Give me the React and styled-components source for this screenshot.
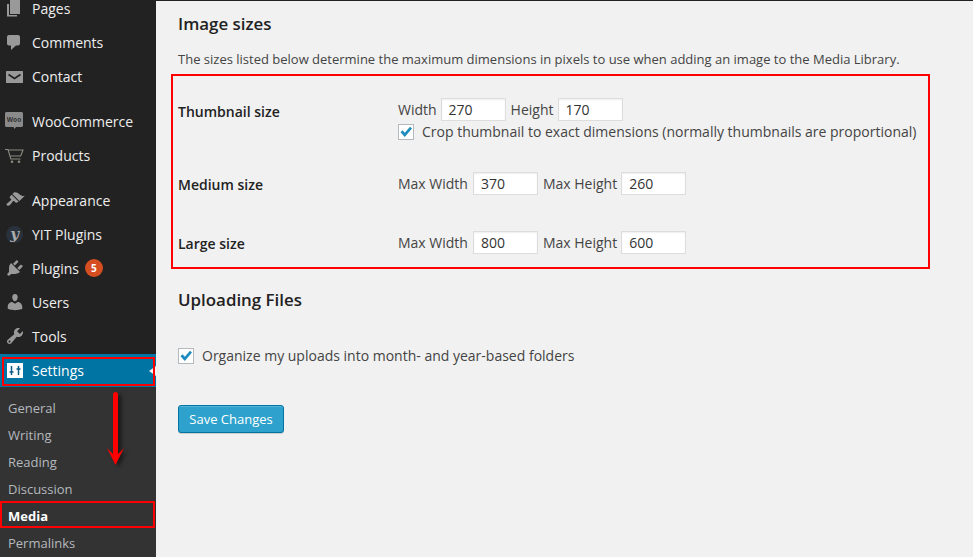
import React from "react";
import styled, { createGlobalStyle } from "styled-components";

const GlobalStyle = createGlobalStyle`
  html, body {
    margin: 0;
    padding: 0;
    height: 557px;
    overflow: hidden;
    background: #f1f1f1;
    font-family: "Open Sans", "Liberation Sans", sans-serif;
  }
`;

const Page = styled.div`
  position: relative;
  display: flex;
  width: 973px;
  height: 557px;
  overflow: hidden;
`;

const Sidebar = styled.nav`
  width: 156px;
  height: 557px;
  flex: none;
  overflow: hidden;
  background: #222;
`;

const MenuList = styled.div`
  display: flex;
  flex-direction: column;
  margin-top: -9px;
`;

const MenuItem = styled.div`
  display: flex;
  align-items: center;
  height: ${p => (p.$current ? "33px" : "34px")};
  padding-left: 5px;
  gap: 7px;
  color: ${p => (p.$current ? "#fff" : "#eee")};
  background: ${p => (p.$current ? "#0074a2" : "transparent")};
  font-size: 14px;
  margin-top: ${p => (p.$spaced ? "11px" : p.$current ? "1px" : "0")};
  position: relative;
`;

const IconBox = styled.svg`
  width: 20px;
  height: 20px;
  flex: none;
  fill: #999;
`;

const YitBadge = styled.span`
  width: 17px;
  height: 17px;
  margin: 0 2px 0 1px;
  flex: none;
  display: flex;
  align-items: center;
  justify-content: center;
  border-radius: 50%;
  background: #29323c;
  color: #aaa;
  font-family: "DejaVu Serif", serif;
  font-style: italic;
  font-weight: bold;
  font-size: 15px;
  line-height: 1;
`;

const CountBadge = styled.span`
  width: 18px;
  height: 18px;
  margin-left: -1px;
  border-radius: 50%;
  background: #d54e21;
  color: #fff;
  font-size: 10px;
  font-weight: 700;
  line-height: 18px;
  text-align: center;
`;

const CurrentArrow = styled.span`
  position: absolute;
  right: 0;
  top: 12px;
  border-style: solid;
  border-color: transparent #f1f1f1 transparent transparent;
  border-width: 5px 7px 5px 0;
`;

const SubMenu = styled.div`
  display: flex;
  flex-direction: column;
  padding-top: 8px;
  background: #333;
  height: 200px;
`;

const SubItem = styled.div`
  height: 27px;
  padding-left: 8px;
  line-height: 27px;
  font-size: 13px;
  color: ${p => (p.$active ? "#fff" : "#b4b9be")};
  font-weight: ${p => (p.$active ? 700 : 400)};
`;

const Main = styled.main`
  flex: 1;
  padding: 11px 0 0 22px;
  border-top: 1px solid #222;
  color: #444;
  box-sizing: border-box;
`;

const SectionTitle = styled.h3`
  margin: ${p => p.$top || 0}px 0 0;
  font-size: 16.9px;
  font-weight: 600;
  line-height: 23px;
  color: #222;
`;

const Description = styled.p`
  margin: 14px 0 0;
  font-size: 13px;
  line-height: 20px;
  color: #444;
`;

const SizeRow = styled.div`
  display: flex;
  margin-top: ${p => p.$top}px;
`;

const SizeLabel = styled.div`
  width: 220px;
  flex: none;
  padding-top: 2px;
  font-size: 14px;
  font-weight: 600;
  line-height: 23px;
  color: #222;
`;

const Fields = styled.div`
  display: flex;
  align-items: center;
  gap: 4px;
  height: 23px;
  margin-top: ${p => p.$top || 0}px;
  font-size: 14px;
  line-height: 23px;
`;

const MaxWidthText = styled.span`
  margin-right: 1px;
`;

const NumberBox = styled.div`
  box-sizing: border-box;
  width: 65px;
  height: 23px;
  margin-right: 1px;
  padding-left: 7px;
  border: 1px solid #ddd;
  background: #fff;
  color: #333;
  font-size: 14px;
  line-height: 21px;
  box-shadow: inset 0 1px 2px rgba(0, 0, 0, 0.07);
`;

const CheckLine = styled.div`
  display: flex;
  align-items: center;
  gap: 8px;
  font-size: 14px;
  line-height: 20px;
  margin-top: ${p => p.$top || 0}px;
`;

const CheckBox = styled.span`
  box-sizing: border-box;
  width: 16px;
  height: 16px;
  flex: none;
  display: flex;
  align-items: center;
  justify-content: center;
  border: 1px solid #b4b9be;
  background: #fff;
`;

const SaveButton = styled.button`
  display: block;
  box-sizing: border-box;
  width: 106px;
  height: 28px;
  margin-top: 39px;
  padding: 0;
  border: 1px solid #0074a2;
  border-radius: 3px;
  background: #2ea2cc;
  box-shadow: inset 0 1px 0 rgba(120, 200, 230, 0.5), 0 1px 0 rgba(0, 0, 0, 0.15);
  color: #fff;
  font-family: inherit;
  font-size: 13px;
  line-height: 26px;
`;

const RedFrame = styled.div`
  position: absolute;
  box-sizing: border-box;
  left: ${p => p.$x}px;
  top: ${p => p.$y}px;
  width: ${p => p.$w}px;
  height: ${p => p.$h}px;
  border: 2px solid #f00;
`;

const DownArrow = styled.svg`
  position: absolute;
  left: 106px;
  top: 390px;
  width: 19px;
  height: 78px;
  filter: drop-shadow(3px 2px 2px rgba(0, 0, 0, 0.55));
`;

const Check = () => (
  <svg width="14" height="14" viewBox="0 0 14 14">
    <path d="M1.5 7.2l2-1.9 2.3 2.5L11 1.8l2 1.7-7.2 8.6z" fill="#1e8cbe" />
  </svg>
);

const Icon = ({ d }) => (
  <IconBox viewBox="0 0 20 20">
    <path d={d} />
  </IconBox>
);

const pagesIcon = "M5 2h10v14H5zM2 6h2v11h8v1.5H2z";
const commentIcon = "M4 3h9c1.1 0 2 .9 2 2v6.5c0 1.1-.9 2-2 2h-2L6 18v-4.500H4c-1.100 0-2-.9-2-2V5c0-1.100.9-2 2-2z";
const brushIcon =
  "M14.48 11.06L7.41 3.99l1.5-1.5c.5-.56 2.3-.47 3.51.32 1.21.8 1.43 1.28 2.91 2.1 1.18.64 2.45 1.26 4.45.85zm-.71.71L6.7 4.7 4.93 6.47c-.39.39-.39 1.02 0 1.41l1.06 1.06c.39.39.39 1.03 0 1.42-.6.6-1.43 1.11-2.21 1.69-.35.26-.7.53-1.01.84C1.43 13.23 1 14.3 2.01 15.31c1.01 1 2.08.58 3.42-.76.31-.31.58-.66.84-1.01.58-.78 1.09-1.61 1.69-2.21.39-.39 1.02-.39 1.41 0l1.06 1.06c.39.39 1.02.39 1.41 0z";
const plugIcon =
  "M13.11 4.36L9.87 7.6 8 5.73l3.24-3.24c.35-.34 1.05-.2 1.56.32.52.51.66 1.21.31 1.55zm-8 1.77l.91-1.12 9.01 9.01-1.19.84c-.71.71-2.63 1.16-3.82 1.16H6.14L4.9 17.26c-.59.59-1.54.59-2.12 0-.59-.58-.59-1.53 0-2.12l1.24-1.24v-3.88c0-1.13.4-3.19 1.09-3.89zm7.26 3.97l3.24-3.24c.34-.35 1.04-.21 1.55.31.52.51.66 1.21.31 1.55l-3.24 3.25z";
const userIcon =
  "M10 9.25c-2.27 0-2.73-3.44-2.73-3.44C7 4.02 7.82 2 9.97 2c2.16 0 2.98 2.02 2.71 3.81 0 0-.41 3.44-2.68 3.44zm0 2.57L12.72 10c2.39 0 4.52 2.33 4.52 4.53v2.49s-3.65 1.13-7.24 1.13c-3.65 0-7.24-1.13-7.24-1.13v-2.49c0-2.25 1.94-4.48 4.47-4.48z";
const toolsIcon =
  "M16.68 9.77c-1.34 1.34-3.3 1.67-4.95.99l-5.41 6.52c-.99.99-2.59.99-3.58 0s-.99-2.59 0-3.57l6.52-5.42c-.68-1.65-.35-3.61.99-4.95 1.28-1.28 3.12-1.62 4.72-1.06l-2.89 2.89 2.82 2.82 2.86-2.87c.53 1.58.18 3.39-1.08 4.65zM3.81 16.21c.4.39 1.04.39 1.43 0 .4-.4.4-1.04 0-1.43-.39-.4-1.03-.4-1.43 0-.39.39-.39 1.03 0 1.43z";

const MailIcon = () => (
  <IconBox viewBox="0 0 20 20">
    <rect x="1" y="5" width="17" height="12" rx="0.5" />
    <path d="M3.5 8.5l6 4 6-4" fill="none" stroke="#222" strokeWidth="1.6" />
  </IconBox>
);

const WooIcon = () => (
  <IconBox viewBox="0 0 20 20">
    <path d="M1.5 1h15c.8 0 1.5.7 1.500 1.500v12c0 .8-.7 1.500-1.500 1.500H11l-1.500 2-1-2h-7C.7 16 0 15.300 0 14.500v-12C0 1.700.7 1 1.500 1z" fill="#8a8a8a" />
    <text x="9" y="11" textAnchor="middle" fontSize="6.5" fontWeight="700" fill="#333">
      Woo
    </text>
  </IconBox>
);

const CartIcon = () => (
  <IconBox viewBox="0 0 20 20">
    <path
      d="M0 4.500H3L5.800 14H15.500M3.400 5H18L15.700 11H5"
      fill="none"
      stroke="#8a8a80"
      strokeWidth="1.100"
    />
    <circle cx="7" cy="16.800" r="1.300" fill="#8a8a80" />
    <circle cx="14" cy="16.800" r="1.300" fill="#8a8a80" />
  </IconBox>
);

const SettingsIcon = () => (
  <IconBox viewBox="0 0 20 20">
    <rect x="2" y="2" width="16" height="15" fill="#fff" />
    <path
      d="M6.500 5v9M4.500 11h4M13.500 5v9M11.500 8h4"
      fill="none"
      stroke="#0b5f85"
      strokeWidth="1.500"
    />
  </IconBox>
);

const App = () => (
  <Page>
    <GlobalStyle />
    <Sidebar>
      <MenuList>
        <MenuItem><Icon d={pagesIcon} />Pages</MenuItem>
        <MenuItem><Icon d={commentIcon} />Comments</MenuItem>
        <MenuItem><MailIcon />Contact</MenuItem>
        <MenuItem $spaced><WooIcon />WooCommerce</MenuItem>
        <MenuItem><CartIcon />Products</MenuItem>
        <MenuItem $spaced><Icon d={brushIcon} />Appearance</MenuItem>
        <MenuItem><YitBadge>y</YitBadge>YIT Plugins</MenuItem>
        <MenuItem><Icon d={plugIcon} />Plugins<CountBadge>5</CountBadge></MenuItem>
        <MenuItem><Icon d={userIcon} />Users</MenuItem>
        <MenuItem><Icon d={toolsIcon} />Tools</MenuItem>
        <MenuItem $current><SettingsIcon />Settings<CurrentArrow /></MenuItem>
        <SubMenu>
          <SubItem>General</SubItem>
          <SubItem>Writing</SubItem>
          <SubItem>Reading</SubItem>
          <SubItem>Discussion</SubItem>
          <SubItem $active>Media</SubItem>
          <SubItem>Permalinks</SubItem>
        </SubMenu>
      </MenuList>
    </Sidebar>
    <Main>
      <SectionTitle>Image sizes</SectionTitle>
      <Description>
        The sizes listed below determine the maximum dimensions in pixels to use when adding an image to the Media Library.
      </Description>
      <SizeRow $top={29}>
        <SizeLabel>Thumbnail size</SizeLabel>
        <div>
          <Fields>
            Width <NumberBox>270</NumberBox>
            Height <NumberBox>170</NumberBox>
          </Fields>
          <CheckLine $top={1}>
            <CheckBox><Check /></CheckBox>
            Crop thumbnail to exact dimensions (normally thumbnails are proportional)
          </CheckLine>
        </div>
      </SizeRow>
      <SizeRow $top={29}>
        <SizeLabel>Medium size</SizeLabel>
        <Fields $top={1}>
          <MaxWidthText>Max Width</MaxWidthText> <NumberBox>370</NumberBox>
          Max Height <NumberBox>260</NumberBox>
        </Fields>
      </SizeRow>
      <SizeRow $top={34}>
        <SizeLabel>Large size</SizeLabel>
        <Fields $top={1}>
          <MaxWidthText>Max Width</MaxWidthText> <NumberBox>800</NumberBox>
          Max Height <NumberBox>600</NumberBox>
        </Fields>
      </SizeRow>
      <SectionTitle $top={33}>Uploading Files</SectionTitle>
      <CheckLine $top={35}>
        <CheckBox><Check /></CheckBox>
        Organize my uploads into month- and year-based folders
      </CheckLine>
      <SaveButton>Save Changes</SaveButton>
    </Main>
    <RedFrame $x={171} $y={74} $w={759} $h={195} />
    <RedFrame $x={2} $y={357} $w={153} $h={29} />
    <RedFrame $x={0} $y={501} $w={155} $h={27} />
    <DownArrow viewBox="0 0 19 78">
      <path d="M7 4.500a2.500 2.500 0 0 1 5 0V64L18 58 9.500 75 1 58 7 64z" fill="#f00" />
    </DownArrow>
  </Page>
);

export default App;
